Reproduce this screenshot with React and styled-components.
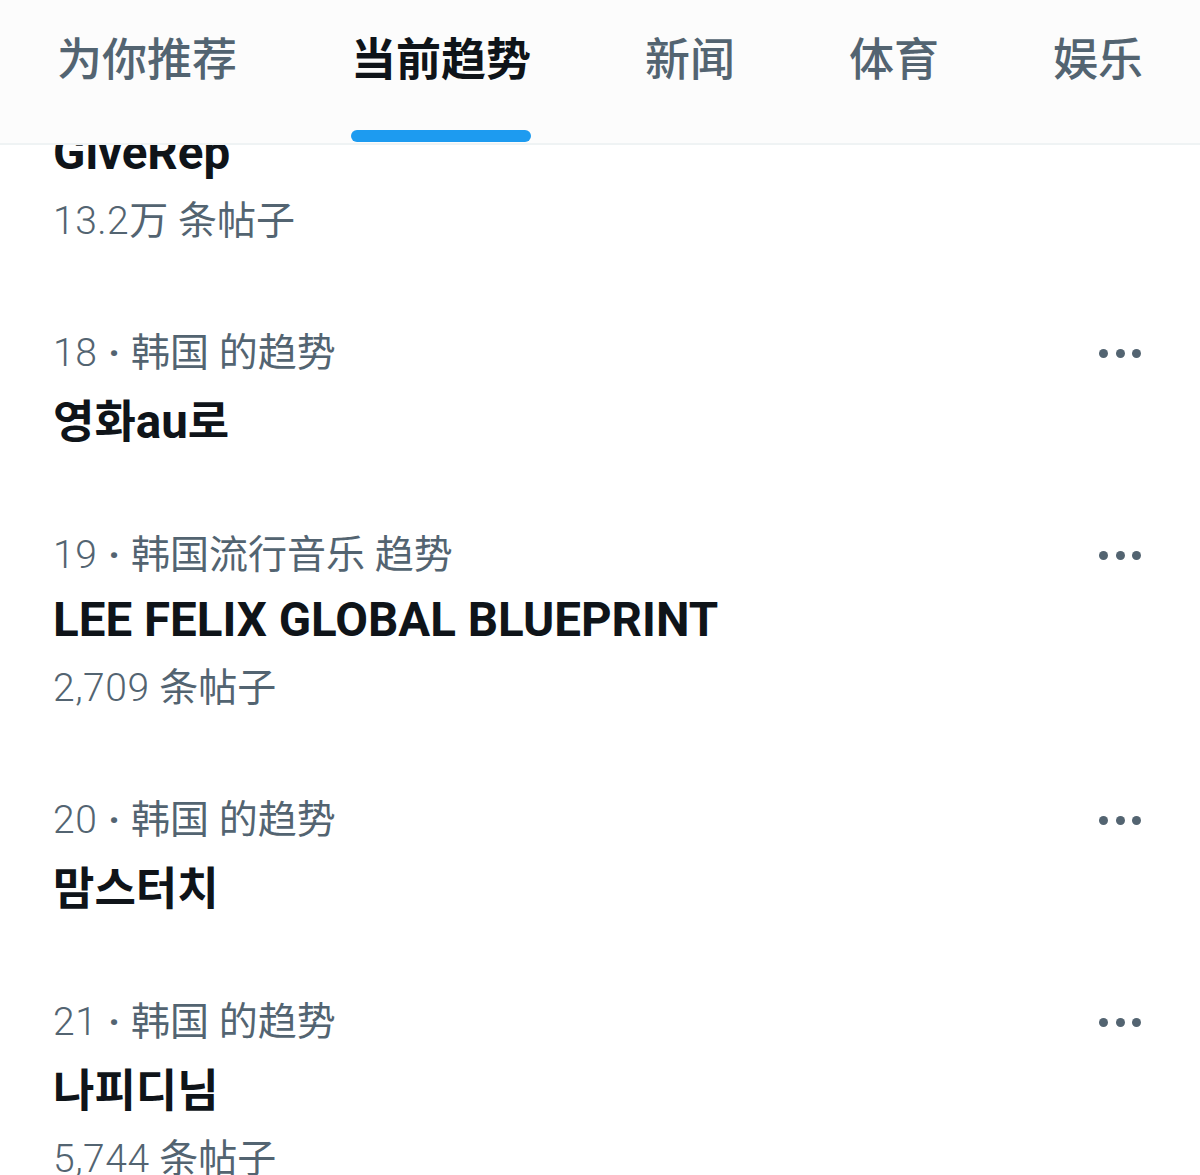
import React, { useLayoutEffect, useRef } from "react";
import styled, { createGlobalStyle } from "styled-components";

const tabs = [
  { label: "为你推荐" },
  { label: "当前趋势", active: true },
  { label: "新闻" },
  { label: "体育" },
  { label: "娱乐" },
];

const trends = [
  { rank: 17, place: "韩国 的趋势", title: "GiveRep", count: "13.2", unit: "万 条帖子" },
  { rank: 18, place: "韩国 的趋势", title: "영화au로" },
  {
    rank: 19,
    place: "韩国流行音乐 趋势",
    title: "LEE FELIX GLOBAL BLUEPRINT",
    count: "2,709",
    unit: " 条帖子",
  },
  { rank: 20, place: "韩国 的趋势", title: "맘스터치" },
  { rank: 21, place: "韩国 的趋势", title: "나피디님", count: "5,744", unit: " 条帖子" },
  { rank: 22, place: "韩国 的趋势", title: "스트레이키즈" },
  { rank: 23, place: "韩国 的趋势", title: "#오늘의_추천", count: "1.1", unit: "万 条帖子" },
];

// hangul is set a little smaller than latin in the titles
const HANGUL = /([\uac00-\ud7af\u3130-\u318f]+)/;
const splitHangul = (text) => text.split(HANGUL).filter(Boolean);
const isHangul = (part) => /[\uac00-\ud7af\u3130-\u318f]/.test(part);

const App = () => {
  const feedRef = useRef(null);

  // the list is shown already scrolled a bit past item 17
  useLayoutEffect(() => {
    if (feedRef.current) feedRef.current.scrollTop = 120;
  }, []);

  return (
    <>
      <GlobalStyle />
      <Page>
        <TabBar>
          {tabs.map((tab) => (
            <Tab key={tab.label}>
              <TabLabel $active={tab.active}>{tab.label}</TabLabel>
              {tab.active && <Indicator />}
            </Tab>
          ))}
        </TabBar>
        <Feed ref={feedRef}>
          {trends.map((trend) => (
            <TrendItem key={trend.rank} $short={!trend.count}>
              <MetaRow>
                <Meta>
                  <Num>{trend.rank}</Num>
                  <Sep>·</Sep>
                  {trend.place}
                </Meta>
                <More aria-label="更多">
                  <Dot />
                  <Dot />
                  <Dot />
                </More>
              </MetaRow>
              <Title>
                {splitHangul(trend.title).map((part, i) =>
                  isHangul(part) ? <Hangul key={i}>{part}</Hangul> : part
                )}
              </Title>
              {trend.count && (
                <Posts>
                  <Num>{trend.count}</Num>
                  {trend.unit}
                </Posts>
              )}
            </TrendItem>
          ))}
        </Feed>
      </Page>
    </>
  );
};

const GlobalStyle = createGlobalStyle`
  html, body, #root {
    height: 100%;
  }
  body {
    margin: 0;
    background: #fff;
    font-family: Roboto, "Noto Sans CJK SC", "Noto Sans CJK KR", sans-serif;
    -webkit-font-smoothing: antialiased;
  }
`;

const Page = styled.div`
  height: 100vh;
  display: flex;
  flex-direction: column;
  overflow: hidden;
  background: #fff;
`;

const TabBar = styled.nav`
  flex: none;
  height: 143px;
  display: flex;
  gap: 114px;
  padding-left: 57px;
  background: #fcfcfc;
  border-bottom: 2px solid #eff3f4;
`;

const Tab = styled.div`
  display: flex;
  flex-direction: column;
  padding-top: 27px;
  cursor: pointer;
`;

const TabLabel = styled.span`
  font-family: "Noto Sans CJK SC", sans-serif;
  font-size: 45px;
  line-height: 60px;
  font-weight: ${(p) => (p.$active ? 700 : 500)};
  color: ${(p) => (p.$active ? "#0f1419" : "#536471")};
  white-space: nowrap;
`;

const Indicator = styled.div`
  margin-top: auto;
  margin-bottom: 1px;
  height: 12px;
  border-radius: 6px;
  background: #1d9bf0;
`;

const Feed = styled.div`
  flex: 1;
  overflow-y: auto;
  scrollbar-width: none;

  &::-webkit-scrollbar {
    display: none;
  }
`;

const TrendItem = styled.div`
  display: flex;
  flex-direction: column;
  padding: 31px 59px 34px 53px;
  min-height: ${(p) => (p.$short ? "202px" : "auto")};
  box-sizing: border-box;
`;

const MetaRow = styled.div`
  height: 64px;
  display: flex;
  align-items: center;
  justify-content: space-between;
`;

const Meta = styled.span`
  margin-bottom: 8px;
  font-size: 39px;
  color: #536471;
  white-space: nowrap;
`;

const Num = styled.span`
  font-family: Roboto, sans-serif;
  font-weight: 300;
  letter-spacing: 0.5px;
`;

const Sep = styled.span`
  margin: 0 11px;
  font-weight: 700;
`;

const More = styled.div`
  display: flex;
  gap: 7.5px;
  align-items: center;
`;

const Dot = styled.span`
  width: 9px;
  height: 9px;
  border-radius: 50%;
  background: #536471;
`;

const Title = styled.div`
  font-family: Roboto, "Noto Sans CJK KR", sans-serif;
  font-size: 47.5px;
  line-height: 67px;
  font-weight: 700;
  color: #0f1419;
  white-space: nowrap;
`;

const Hangul = styled.span`
  font-family: "Noto Sans CJK KR", sans-serif;
  font-size: 45px;
`;

const Posts = styled.div`
  font-size: 39px;
  line-height: 69px;
  color: #536471;
  white-space: pre;
`;

export default App;
